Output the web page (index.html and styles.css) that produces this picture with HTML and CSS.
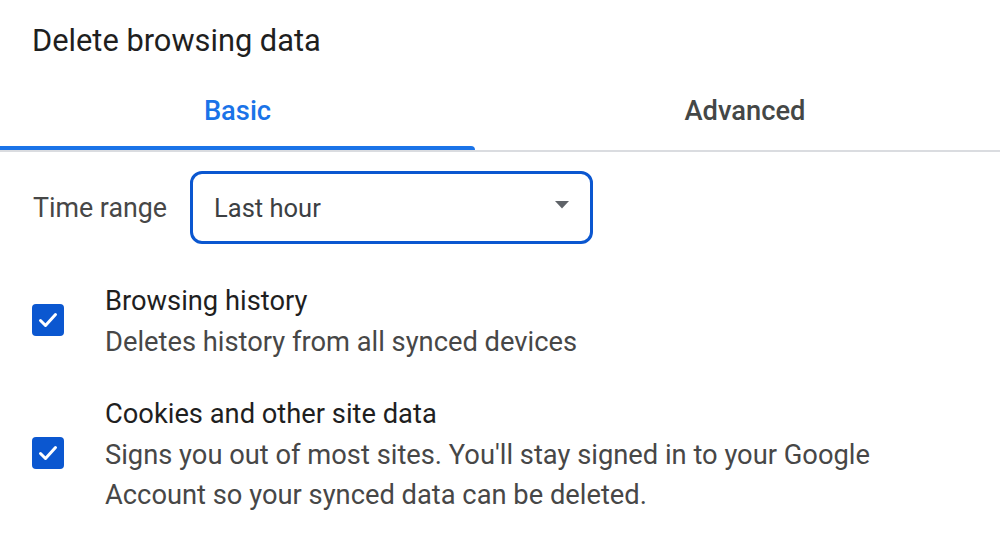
FILE: index.html
```html
<!DOCTYPE html>
<html lang="en">
<head>
<meta charset="utf-8">
<title>Delete browsing data</title>
<link rel="stylesheet" href="styles.css">
</head>
<body>
<div class="dialog">
  <h1 class="title">Delete browsing data</h1>
  <div class="tabs">
    <div class="tab tab-active">Basic<span class="indicator"></span></div>
    <div class="tab tab-wide">Advanced</div>
  </div>
  <div class="range-row">
    <span class="range-label">Time range</span>
    <div class="select">
      <span class="select-value">Last hour</span>
      <svg class="select-arrow" width="14" height="8" viewBox="0 0 14 8"><path d="M0 0 L14 0 L7 7.5 Z" fill="#5f6368"/></svg>
    </div>
  </div>
  <div class="items">
    <div class="item">
      <span class="checkbox">
        <svg width="32" height="32" viewBox="0 0 32 32"><path d="M8.5 16.5 L13.5 21.5 L23.5 10.5" fill="none" stroke="#fff" stroke-width="3" stroke-linecap="round" stroke-linejoin="round"/></svg>
      </span>
      <div class="item-text">
        <div class="item-title">Browsing history</div>
        <div class="item-desc">Deletes history from all synced devices</div>
      </div>
    </div>
    <div class="item">
      <span class="checkbox">
        <svg width="32" height="32" viewBox="0 0 32 32"><path d="M8.5 16.5 L13.5 21.5 L23.5 10.5" fill="none" stroke="#fff" stroke-width="3" stroke-linecap="round" stroke-linejoin="round"/></svg>
      </span>
      <div class="item-text">
        <div class="item-title">Cookies and other site data</div>
        <div class="item-desc">Signs you out of most sites. You'll stay signed in to your Google<br>Account so your synced data can be deleted.</div>
      </div>
    </div>
  </div>
</div>
</body>
</html>
```
FILE: styles.css
```css
html, body {
  margin: 0;
  padding: 0;
  background: #ffffff;
  overflow: hidden;
}
body {
  font-family: Roboto, "Noto Sans", "Liberation Sans", sans-serif;
  color: #1f1f1f;
}
.dialog {
  width: 1000px;
}
.title {
  margin: 0;
  padding: 23px 0 0 32px;
  font-size: 30.8px;
  line-height: 36px;
  font-weight: 400;
  color: #1f1f1f;
}
.tabs {
  margin-top: 13px;
  display: flex;
  border-bottom: 2px solid #dadce0;
}
.tab {
  position: relative;
  flex: none;
  box-sizing: border-box;
  height: 78px;
  padding-top: 23px;
  line-height: 32px;
  font-size: 27.3px;
  font-weight: 500;
  text-align: center;
  color: #444746;
  width: 475px;
}
.tab-wide {
  width: 540px;
}
.tab-active {
  color: #1a73e8;
}
.indicator {
  position: absolute;
  left: 0;
  right: 0;
  bottom: 0;
  height: 4px;
  background: #1a73e8;
  border-radius: 0 4px 0 0;
}
.range-row {
  display: flex;
  align-items: center;
  gap: 23px;
  margin-top: 19px;
  padding-left: 33px;
}
.range-label {
  font-size: 26.8px;
  color: #474747;
}
.select {
  box-sizing: border-box;
  width: 403px;
  height: 73px;
  border: 3px solid #0b57d0;
  border-radius: 12px;
  display: flex;
  align-items: center;
  justify-content: space-between;
  padding: 0 21px 2px 21px;
}
.select-value {
  font-size: 25.5px;
  color: #3c4043;
  padding-top: 2px;
}
.select-arrow {
  display: block;
  margin-top: -4px;
}
.items {
  margin-top: 37px;
  padding-left: 32px;
  display: flex;
  flex-direction: column;
  gap: 32px;
}
.item {
  display: flex;
  align-items: center;
  gap: 41px;
}
.checkbox {
  flex: none;
  width: 32px;
  height: 32px;
  border-radius: 4px;
  background: #0b57d0;
  display: block;
  margin-bottom: 4px;
}
.checkbox svg {
  display: block;
}
.item-text {
  font-size: 27.3px;
  line-height: 40.5px;
}
.item-title {
  color: #1f1f1f;
}
.item-desc {
  color: #474747;
}
```
